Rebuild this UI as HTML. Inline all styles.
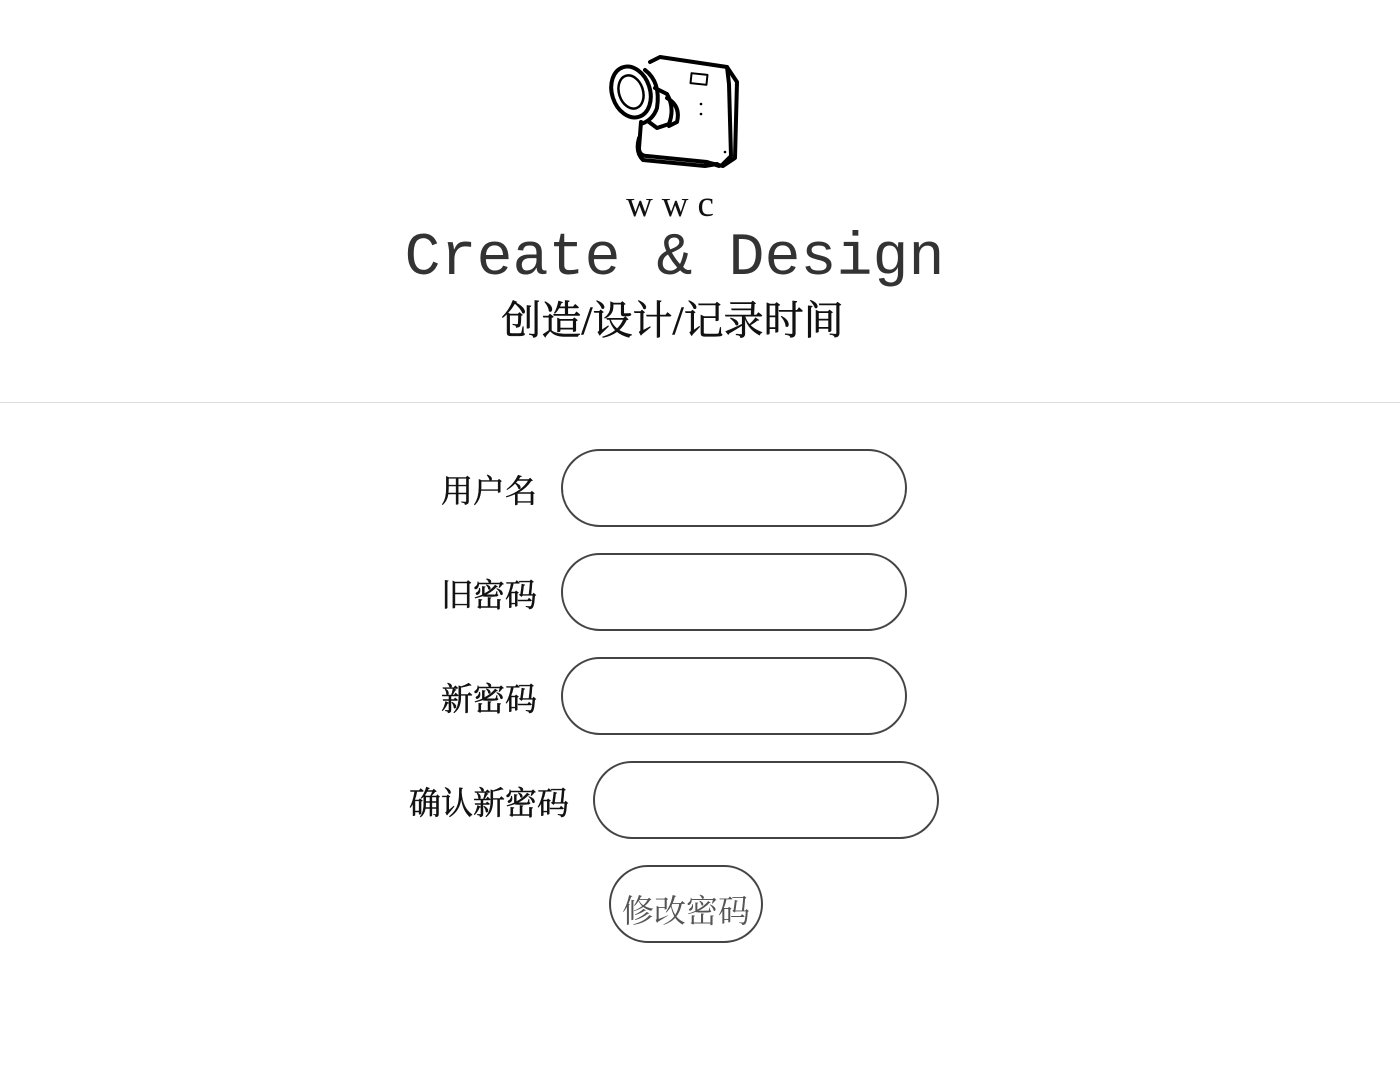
<!DOCTYPE html>
<html><head><meta charset="utf-8"><style>
body{margin:0;background:#fff;width:1400px;height:1074px;position:relative;overflow:hidden}
.a{position:absolute;white-space:nowrap}
.wwc{left:0;width:1349px;text-align:center;top:183px;font:37px/44px "Liberation Serif",serif;letter-spacing:9px;color:#111}
.t{left:0;width:1349px;text-align:center;top:226px;font:60px/66px "Liberation Mono",monospace;color:#333}
.c{left:0;width:1345px;text-align:center;top:296px;font:40px/50px "Liberation Serif","Noto Serif CJK SC",serif;color:#111;-webkit-text-stroke:0.6px #111}
.hr{left:0;top:402px;width:1400px;height:0;border-top:1px solid #ddd}
.lab{font:32px/84px "Liberation Serif","Noto Serif CJK SC",serif;color:#111;text-align:right;-webkit-text-stroke:0.5px #111}
.in{box-sizing:border-box;width:346px;height:78px;border:2px solid #444;border-radius:39px}
.btn{box-sizing:border-box;left:609px;top:865px;width:154px;height:78px;border:2px solid #444;border-radius:39px;font:32px/78px "Liberation Serif","Noto Serif CJK SC",serif;color:#555;text-align:center;padding-top:5px}
</style></head><body>
<svg class="a" style="left:605px;top:52px" width="140" height="122" viewBox="0 0 140 122">
<g fill="none" stroke="#000" stroke-width="4" stroke-linejoin="round" stroke-linecap="round">
<path d="M45 10 L55 5 L122 15 L132 30 L130 106 L118 114 L100 110"/>
<path d="M122 15 L124 32 L126 104 L118 112"/>
<path d="M36 70 L34 96 Q34 104 42 104 L102 110 L114 114"/>
<path d="M34 86 Q30 100 38 108 L100 114 L112 112"/>
<ellipse cx="26" cy="40" rx="19" ry="26" transform="rotate(-18 26 40)"/>
<ellipse cx="26" cy="40" rx="12" ry="17" stroke-width="2.5" transform="rotate(-18 26 40)"/>
<path d="M40 18 Q56 30 52 56 Q48 68 36 72"/>
<path d="M50 36 L62 42 Q70 56 64 72 L52 76 L44 70"/>
<path d="M62 46 Q76 54 72 70 L64 74"/>
<rect x="86" y="22" width="16" height="10" stroke-width="2" transform="rotate(6 94 27)"/>
</g>
<circle cx="96" cy="52" r="1.3"/><circle cx="96" cy="62" r="1.3"/><circle cx="120" cy="100" r="1.3"/>
</svg>
<div class="a wwc">wwc</div>
<div class="a t">Create &amp; Design</div>
<div class="a c">创造/设计/记录时间</div>
<div class="a hr"></div>
<div class="a lab" style="left:300px;width:237px;top:449px">用户名</div>
<div class="a in" style="left:561px;top:449px"></div>
<div class="a lab" style="left:300px;width:237px;top:553px">旧密码</div>
<div class="a in" style="left:561px;top:553px"></div>
<div class="a lab" style="left:300px;width:237px;top:657px">新密码</div>
<div class="a in" style="left:561px;top:657px"></div>
<div class="a lab" style="left:300px;width:269px;top:761px">确认新密码</div>
<div class="a in" style="left:593px;top:761px"></div>
<div class="a btn">修改密码</div>
</body></html>
